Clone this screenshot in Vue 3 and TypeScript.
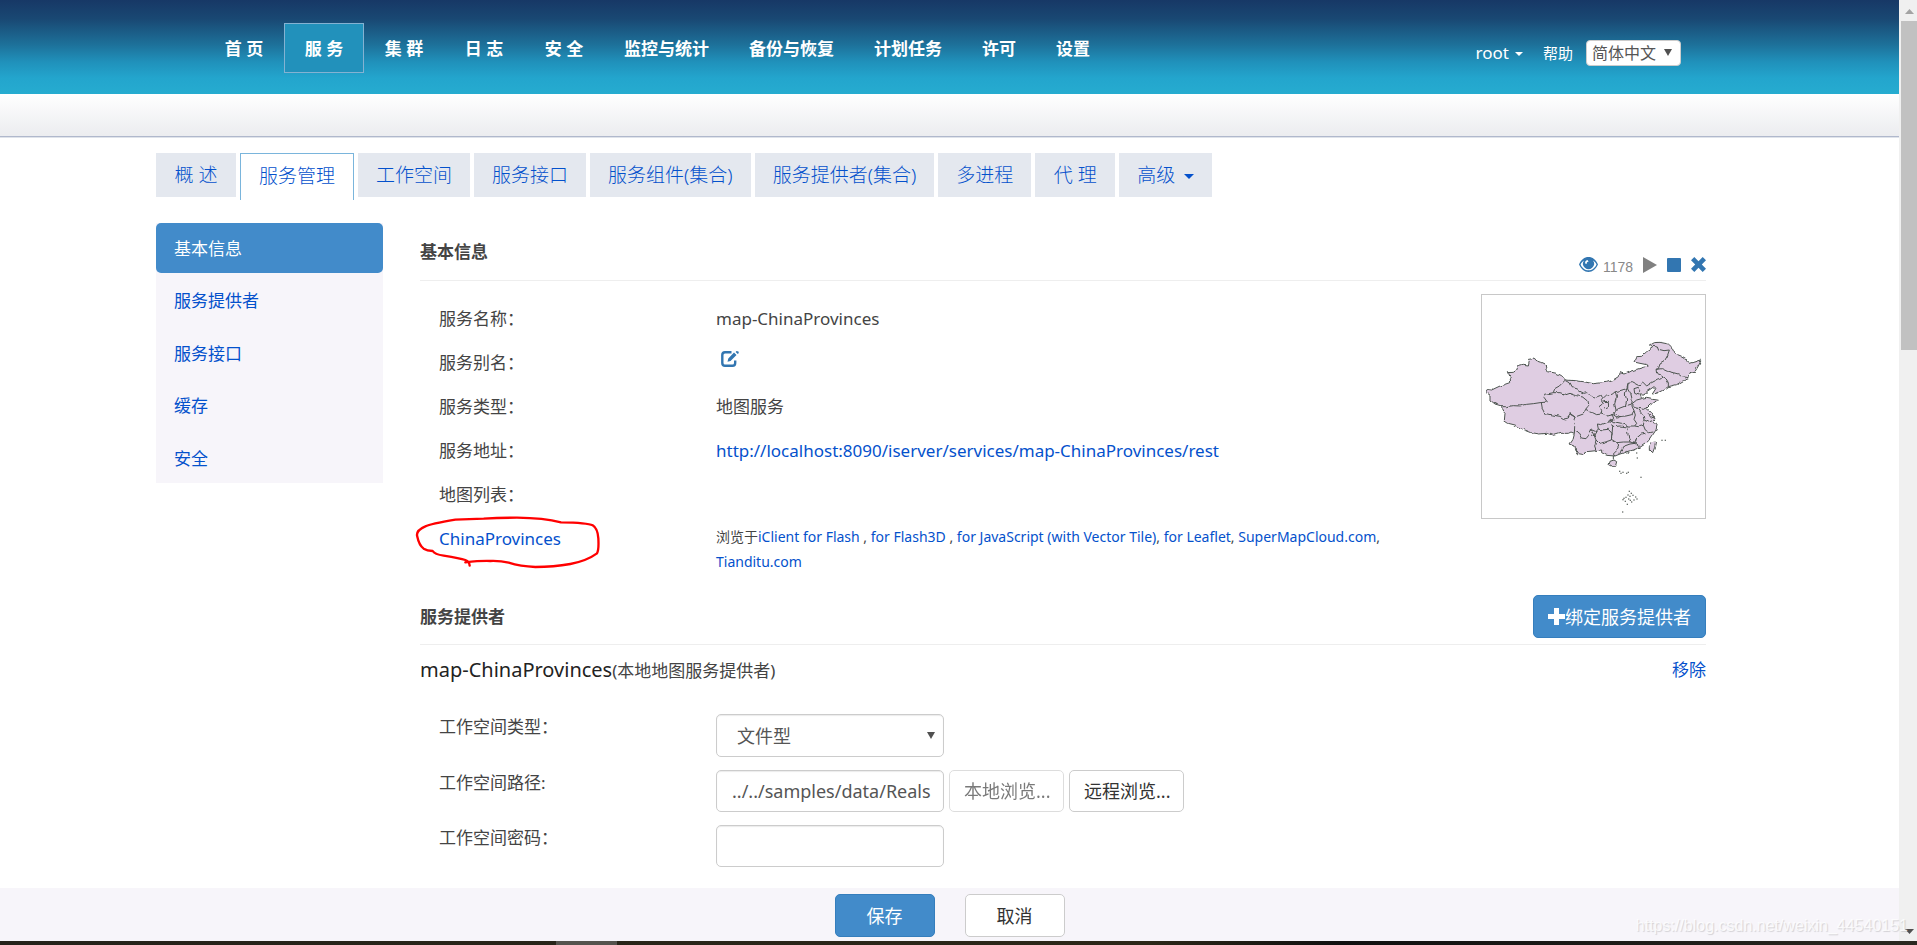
<script setup lang="ts">
import { ref } from 'vue'

interface Tab {
  label: string
  caret?: boolean
}

const nav: string[] = ['首 页', '服 务', '集 群', '日 志', '安 全', '监控与统计', '备份与恢复', '计划任务', '许可', '设置']
const activeNav = ref(1)

const tabs: Tab[] = [
  { label: '概 述' },
  { label: '服务管理' },
  { label: '工作空间' },
  { label: '服务接口' },
  { label: '服务组件(集合)' },
  { label: '服务提供者(集合)' },
  { label: '多进程' },
  { label: '代 理' },
  { label: '高级', caret: true },
]
const activeTab = ref(1)

const side: string[] = ['基本信息', '服务提供者', '服务接口', '缓存', '安全']
const activeSide = ref(0)

const language = ref('简体中文')
const workspaceType = ref('文件型')
const workspacePath = ref('../../samples/data/Reals')
const password = ref('')

const islands: number[][] = [
  [479, 574], [483, 580], [489, 577], [500, 580], [505, 577], [543, 592], [532, 534], [530, 519], [606, 481], [616, 481],
  [508, 634], [514, 640], [504, 645], [519, 646], [527, 651], [498, 652], [492, 655], [489, 659], [506, 657], [511, 661],
  [522, 660], [531, 657], [496, 664], [502, 673], [488, 696], [510, 649], [515, 666],
]
const borders: string[] = [
  'M125,380 L140,380 160,377 180,378 200,373 220,371 240,368 262,366 252,352 256,343 280,338 284,326 298,318 308,308 316,300',
  'M244,368 L247,386 254,400 275,405 300,409 312,417 325,414 330,400 345,411 370,402 377,388 386,376 384,362 372,352 350,347 330,340 318,344 300,338 280,338',
  'M316,300 L330,308 336,320 350,324 358,333 372,340 380,338 390,346 402,354 412,350 422,346 430,354 424,362 430,372 420,380 425,392 424,402 410,404 398,398 385,392 377,388',
  'M345,411 L340,425 344,440 343,460 M343,452 L356,460 364,474 378,476 386,466 396,450 408,455 415,447 412,432 424,434 440,428 452,418 462,420 455,404',
  'M430,354 L440,345 456,343 466,335 480,332 500,326 504,310 520,308 535,316 548,306 560,318 575,308 590,300 604,296 606,286 590,280 588,268 595,266 600,252 612,245 622,228 628,210 612,212 596,208 592,198 578,196',
  'M588,268 L605,266 622,274 640,278 655,282 665,290 686,293 M606,286 L618,296 625,308 625,320',
  'M466,335 L470,350 464,372 468,390 462,402 440,408 424,402 M430,365 L445,364 446,378 432,384 M500,326 L496,345 500,360 496,378 480,384 468,390',
  'M504,310 L503,324 512,340 517,360 515,372 496,378 M522,326 L535,322 542,332 536,345 524,340 Z M515,372 L530,360 545,356 M517,376 L530,384 550,388 560,385',
  'M515,376 L522,392 515,404 498,408 480,410 462,402 M522,392 L526,405 522,418 530,430 524,438 505,438 485,430 465,426 452,418',
  'M530,384 L540,398 550,408 552,420 566,426 583,420 M524,438 L535,440 550,436 552,425 M550,436 L556,450 568,458 580,456',
  'M455,436 L462,440 480,438 505,442 502,456 506,472 510,486 525,490 530,474 544,462 556,460 M452,420 L458,440 456,462 454,478 470,488 490,486 510,486',
  'M408,455 L402,465 408,480 418,490 436,486 454,480 456,460 445,448 425,450 415,447 M408,480 L404,498 408,510 M470,488 L476,498 470,512 460,522 465,528 M525,490 L532,496 540,502',
  'M480,520 L488,500 510,492 525,490 M455,404 L470,414 480,410 M394,452 L402,465 396,470 M345,411 L332,404 330,396',
]
</script>

<template>
  <div class="screen">
    <div class="page">
      <header class="top">
        <nav class="nav" aria-label="主导航">
          <a v-for="(n, i) in nav" :key="n" href="#" :class="{ active: i === activeNav, spaced: n.includes(' ') }" @click.prevent="activeNav = i">{{ n }}</a>
        </nav>
        <div class="user">
          <a href="#" class="root">root<i class="caret"></i></a>
          <a href="#" class="help">帮助</a>
          <span class="pick lang">
            <select v-model="language" aria-label="语言">
              <option>简体中文</option>
              <option>English</option>
            </select>
            <i class="tri"></i>
          </span>
        </div>
      </header>
      <div class="subbar"></div>

      <div class="content">
        <nav class="tabs" aria-label="服务">
          <a v-for="(t, i) in tabs" :key="t.label" href="#" :class="{ active: i === activeTab }" @click.prevent="activeTab = i">{{ t.label }}<i v-if="t.caret" class="caret"></i></a>
        </nav>

        <div class="columns">
          <nav class="side" aria-label="服务设置">
            <a v-for="(s, i) in side" :key="s" href="#" :class="{ active: i === activeSide }" @click.prevent="activeSide = i">{{ s }}</a>
          </nav>

          <main>
            <section>
              <div class="head">
                <h2>基本信息</h2>
                <div class="tools">
                  <svg width="19" height="15" viewBox="0 0 19 15">
                    <path fill="#3276b1" fill-rule="evenodd" d="M9.500 0C5.500 0 2 2.500 0 7.500 2 12 5.500 15 9.500 15S17 12 19 7.500C17 2.500 13.500 0 9.500 0ZM5 3.400A5.500 5.500 0 1 0 14 3.400C16 4.500 17 6 17.500 7.500 16 11 13 13.300 9.500 13.300S3 11 1.600 7.500C2.100 6 3.200 4.500 5 3.400ZM8.500 3A3 3 0 0 0 6.200 6.500L7.500 7A2.500 2.500 0 0 1 9.600 4.500Z" />
                  </svg>
                  <span class="count">1178</span>
                  <button type="button" aria-label="启动"><svg width="14" height="16" viewBox="0 0 14 16"><path fill="#808080" d="M0 0 14 8 0 16Z" /></svg></button>
                  <button type="button" aria-label="停止"><svg width="14" height="14" viewBox="0 0 14 14"><rect width="14" height="14" rx="1" fill="#3276b1" /></svg></button>
                  <button type="button" aria-label="删除"><svg width="15" height="15" viewBox="0 0 15 15"><path fill="#3276b1" d="M3.300 0 7.500 4.200 11.700 0 15 3.300 10.800 7.500 15 11.700 11.700 15 7.500 10.800 3.300 15 0 11.700 4.200 7.500 0 3.300Z" /></svg></button>
                </div>
              </div>

              <div class="info">
                <dl>
                  <dt>服务名称：</dt>
                  <dd>map-ChinaProvinces</dd>
                  <dt>服务别名：</dt>
                  <dd>
                    <button type="button" class="edit" aria-label="编辑">
                      <svg width="18" height="16" viewBox="0 0 18 16">
                        <path fill="none" stroke="#3276b1" stroke-width="2.400" d="M10.500 1.300H4Q1.300 1.300 1.300 4V12Q1.300 14.700 4 14.700H11.500Q14.200 14.700 14.200 12V9.500" />
                        <path fill="#3276b1" d="M13 1.500 15.500 4 9.500 10 6.500 10.800 7.300 7.400ZM14.600 .9 15.500 0 17.500 .5 17.800 2 16.800 3Z" />
                      </svg>
                    </button>
                  </dd>
                  <dt>服务类型：</dt>
                  <dd>地图服务</dd>
                  <dt>服务地址：</dt>
                  <dd><a href="#">http://localhost:8090/iserver/services/map-ChinaProvinces/rest</a></dd>
                  <dt>地图列表：</dt>
                  <dd></dd>
                  <dt class="marked">
                    <a href="#">ChinaProvinces</a>
                    <svg class="mark" width="188" height="56" viewBox="44 852 564 168">
                      <path fill="none" stroke="#f00" stroke-width="7" stroke-linecap="round" stroke-linejoin="round" d="M195 997Q240 992 270 993 300 992 325 998 360 1009 405 1011 460 1011 510 1002 560 992 590 970 596 960 594 925 592 895 577 886 562 878 482 877 430 864 350 863 300 863 250 866L165 869Q90 882 75 889 45 902 51 920 56 945 70 956 80 962 97 963 103 973 130 977 180 985 195 990 207 994 208 1007" />
                    </svg>
                  </dt>
                  <dd class="views">浏览于<a href="#">iClient for Flash</a> , <a href="#">for Flash3D</a> , <a href="#">for JavaScript (with Vector Tile)</a>, <a href="#">for Leaflet</a>, <a href="#">SuperMapCloud.com</a>, <a href="#">Tianditu.com</a></dd>
                </dl>
                <svg class="map" viewBox="66 45 669 669" role="img" aria-label="ChinaProvinces">
                  <filter id="coast" x="-2%" y="-2%" width="104%" height="104%">
                    <feTurbulence type="fractalNoise" baseFrequency="0.06" numOctaves="1" seed="4" />
                    <feDisplacementMap in="SourceGraphic" scale="12" xChannelSelector="R" yChannelSelector="G" />
                  </filter>
                  <g fill="none" stroke="#4c544f" stroke-width="3" stroke-linejoin="round" filter="url(#coast)">
                    <path fill="#dfcde2" d="M77 337 82 328 95 330 105 325 120 318 135 314 152 308 150 290 145 278 160 277 170 270 175 257 190 253 205 255 208 241 216 240 222 233 228 241 245 247 256 252 258 270 265 275 290 280 305 287 316 300 345 302 370 305 400 311 440 307 462 300 478 290 480 278 492 282 510 274 530 268 550 262 568 258 560 254 540 250 522 246 530 230 545 229 560 215 578 203 568 195 580 188 600 187 625 192 634 200 645 222 660 228 680 240 690 250 705 246 724 240 715 258 706 273 690 278 686 296 670 302 650 314 625 320 610 330 590 340 577 342 588 325 582 320 560 335 552 345 540 345 545 355 560 352 575 355 595 358 582 368 570 375 560 385 572 395 580 410 588 420 580 428 592 432 588 450 578 465 568 480 555 492 540 502 520 510 500 516 480 522 465 528 440 526 425 518 425 510 408 512 390 514 374 515 373 527 355 524 347 510 345 498 330 492 338 480 343 460 333 456 325 460 300 460 280 466 262 460 238 462 215 458 190 448 165 435 145 430 133 422 135 400 126 390 125 378 105 372 90 360 90 345Z" />
                    <path fill="#dfcde2" d="M450 544 462 540 470 545 467 556 456 561 447 556ZM568 500 575 488 587 486 584 502 578 518 568 508Z" />
                    <path v-for="b in borders" :key="b" :d="b" />
                    <path d="M460 527V538M490 520 500 514 510 517M565 400 575 412 585 414" />
                  </g>
                  <rect v-for="(p, i) in islands" :key="i" :x="p[0] - 2" :y="p[1] - 2" width="4" height="4" fill="#6d736f" />
                </svg>
              </div>
            </section>

            <section>
              <div class="head second">
                <h2>服务提供者</h2>
                <button type="button" class="btn primary bind">
                  <svg width="17" height="17" viewBox="0 0 17 17"><path fill="#fff" d="M6 0H11V6H17V11H11V17H6V11H0V6H6Z" /></svg>绑定服务提供者
                </button>
              </div>
              <div class="provider">
                <h3>map-ChinaProvinces<small>(本地地图服务提供者)</small></h3>
                <a href="#">移除</a>
              </div>
              <form class="form" @submit.prevent>
                <label for="ws-type">工作空间类型：</label>
                <div class="field">
                  <span class="pick">
                    <select id="ws-type" v-model="workspaceType" class="control">
                      <option>文件型</option>
                      <option>数据库型</option>
                    </select>
                    <i class="tri"></i>
                  </span>
                </div>
                <label for="ws-path">工作空间路径:</label>
                <div class="field">
                  <input id="ws-path" v-model="workspacePath" class="control" type="text" />
                  <button type="button" class="btn" disabled>本地浏览...</button>
                  <button type="button" class="btn">远程浏览...</button>
                </div>
                <label for="ws-pass">工作空间密码：</label>
                <div class="field">
                  <input id="ws-pass" v-model="password" class="control" type="password" />
                </div>
              </form>
            </section>
          </main>
        </div>
      </div>

      <footer class="actions">
        <button type="button" class="btn primary">保存</button>
        <button type="button" class="btn">取消</button>
      </footer>
    </div>

    <div class="scroll" aria-hidden="true">
      <svg width="18" height="21" viewBox="0 0 18 21"><path fill="#a3a3a3" d="M6 14 10.500 9 15 14Z" /></svg>
      <div class="thumb"></div>
      <svg class="down" width="18" height="20" viewBox="0 0 18 20"><path fill="#505050" d="M6 8H15L10.500 13Z" /></svg>
    </div>
    <div class="taskbar"><i></i></div>
    <span class="watermark">https://blog.csdn.net/weixin_44540151</span>
  </div>
</template>

<style>
body {
  margin: 0;
  background: #fff;
}
</style>

<style scoped>
.screen {
  position: relative;
  display: grid;
  grid-template-columns: minmax(0, 1fr) 18px;
  grid-template-rows: 1fr 4px;
  min-height: 100vh;
  font-family: "Noto Sans", "Noto Sans CJK SC", sans-serif;
  font-size: 17px;
  line-height: 24px;
  color: #444;
}
.screen * {
  box-sizing: border-box;
}
a {
  color: #0451cc;
  text-decoration: none;
}
button,
input,
select {
  font: inherit;
  margin: 0;
}
svg {
  display: block;
}
h2,
h3,
dl,
dd {
  margin: 0;
}
.page {
  display: flex;
  flex-direction: column;
  min-width: 0;
}
.top {
  height: 94px;
  padding: 23px 218px 0 204px;
  display: flex;
  justify-content: space-between;
  align-items: flex-start;
  background: linear-gradient(#173866 0, #194873 20%, #1d7099 47%, #2091bb 66%, #23a5cd 83%, #26acd0 100%);
}
.nav {
  display: flex;
}
.nav a {
  height: 50px;
  padding: 0 19px;
  border: 1px solid transparent;
  line-height: 50px;
  text-align: center;
  white-space: nowrap;
  font-weight: 700;
  color: #fff;
}
.nav .spaced {
  min-width: 80px;
}
.nav a.active {
  background: #2291bb;
  border-color: #84b2d2;
}
.user {
  display: flex;
  align-items: center;
  height: 60px;
}
.user a {
  color: #fff;
}
.root {
  margin-right: 20px;
}
.help {
  margin-right: 13px;
  font-size: 15px;
}
.caret {
  display: inline-block;
  margin-left: 6px;
  vertical-align: middle;
  border: 4px solid transparent;
  border-top-color: currentColor;
  border-bottom: 0;
}
.pick {
  position: relative;
  display: inline-block;
}
.pick select {
  appearance: none;
  outline: none;
}
.tri {
  position: absolute;
  right: 9px;
  top: calc(50% - 4px);
  border: 4px solid transparent;
  border-top: 7px solid #505050;
  border-bottom: 0;
  pointer-events: none;
}
.lang select {
  display: block;
  width: 95px;
  height: 26px;
  padding: 0 5px;
  border: 1px solid #ccc;
  border-radius: 4px;
  background: #fff;
  color: #555;
  font-size: 16px;
  line-height: 24px;
}
.subbar {
  height: 44px;
  background: linear-gradient(#fff, #ebecef);
  border-bottom: 1px solid #dfe3ea;
  box-shadow: inset 0 -1px 0 #b0b8cc;
}
.content {
  flex: 1;
  padding: 15px 193px 0 156px;
}
.tabs {
  display: flex;
  align-items: flex-start;
  gap: 4px;
  height: 47px;
}
.tabs a {
  min-width: 80px;
  height: 44px;
  padding: 0 18px;
  background: #e4e8ef;
  font-size: 19px;
  font-weight: 300;
  line-height: 45px;
  text-align: center;
  white-space: nowrap;
}
.tabs .active {
  height: 47px;
  border: 1px solid #7ab5dc;
  border-bottom: 0;
  background: #fff;
}
.tabs .caret {
  margin-left: 9px;
  border-width: 5px;
  border-bottom: 0;
}
.columns {
  display: grid;
  grid-template-columns: 227px minmax(0, 1fr);
  column-gap: 37px;
  align-items: start;
  margin-top: 23px;
}
.side {
  display: grid;
  grid-template-rows: 50px repeat(4, 1fr);
  row-gap: 3px;
  height: 260px;
  background: #f7f5fa;
}
.side a {
  display: flex;
  align-items: center;
  padding: 1px 0 0 18px;
}
.side .active {
  border-radius: 5px;
  background: #428bca;
  color: #fff;
}
.head {
  display: flex;
  justify-content: space-between;
  align-items: center;
  height: 58px;
  border-bottom: 1px solid #eee;
}
.head h2 {
  font-size: 17px;
  font-weight: 700;
}
.tools {
  display: flex;
  align-items: center;
  align-self: flex-end;
  height: 31px;
}
.tools button,
.edit {
  padding: 0;
  border: 0;
  background: none;
}
.tools button {
  margin-left: 10px;
}
.count {
  margin-left: 5px;
  padding-top: 4px;
  font-family: "Liberation Sans", Arial, sans-serif;
  font-size: 14px;
  color: #888;
}
.info {
  display: flex;
  justify-content: space-between;
  align-items: flex-start;
  padding-top: 13px;
}
dl {
  display: grid;
  grid-template-columns: 277px minmax(0, 670px);
  grid-auto-rows: 44px;
  padding-left: 19px;
}
dt,
dd {
  line-height: 49px;
  white-space: nowrap;
}
.edit {
  display: block;
  margin: 13px 0 0 5px;
}
.marked {
  position: relative;
}
.mark {
  position: absolute;
  left: -24px;
  top: 0;
}
dd.views {
  padding-top: 10px;
  font-size: 14px;
  line-height: 25px;
  white-space: normal;
}
.map {
  width: 225px;
  height: 225px;
  flex: none;
  border: 1px solid #c8c8c8;
}
.second {
  margin-top: 29px;
  padding-top: 2px;
}
.btn {
  min-width: 100px;
  height: 43px;
  padding: 0 14px;
  border: 1px solid #ccc;
  border-radius: 5px;
  background: #fff;
  color: #333;
  font-size: 18px;
  white-space: nowrap;
}
.btn:disabled {
  opacity: 0.65;
}
.primary {
  border-color: #357ebd;
  background: #428bca;
  color: #fff;
}
.bind {
  display: flex;
  align-items: center;
}
.provider {
  display: flex;
  justify-content: space-between;
  align-items: center;
  height: 50px;
}
.provider h3 {
  font-size: 20px;
  font-weight: 400;
  color: #222;
}
.provider small {
  font-size: 17px;
  color: #444;
}
.form {
  display: grid;
  grid-template-columns: 277px minmax(0, 1fr);
  row-gap: 13px;
  padding: 19px 0 20px 19px;
}
.form label {
  line-height: 26px;
}
.field {
  display: flex;
  gap: 5px;
}
.field .btn {
  width: 115px;
  height: 42px;
}
.control {
  width: 228px;
  height: 42px;
  padding: 0 8px 0 15px;
  border: 1px solid #ccc;
  border-radius: 5px;
  background: #fff;
  box-shadow: inset 0 1px 1px rgba(0, 0, 0, 0.08);
  color: #555;
  font-size: 18px;
  outline: none;
}
.form select {
  display: block;
  height: 43px;
  padding: 0 20px;
}
.actions {
  display: flex;
  justify-content: center;
  gap: 30px;
  height: 53px;
  padding-top: 6px;
  background: #f7f5fa;
}
.scroll {
  display: flex;
  flex-direction: column;
  background: #f0f0f0;
}
.thumb {
  height: 329px;
  margin-left: 2px;
  background: #c1c1c1;
}
.down {
  margin-top: auto;
}
.taskbar {
  grid-column: 1 / -1;
  display: grid;
  grid-template-columns: 29% 61px;
  background: linear-gradient(90deg, #25221a, #2c2718 60%, #101010 70%, #2a2820);
}
.taskbar i {
  grid-column: 2;
  background: #55534e;
}
.watermark {
  position: absolute;
  right: 9px;
  bottom: 7px;
  font-family: "Liberation Sans", Arial, sans-serif;
  font-size: 16px;
  line-height: 24px;
  color: rgba(255, 255, 255, 0.8);
  text-shadow: 1px 1px 1px rgba(0, 0, 0, 0.15);
  pointer-events: none;
}
</style>
